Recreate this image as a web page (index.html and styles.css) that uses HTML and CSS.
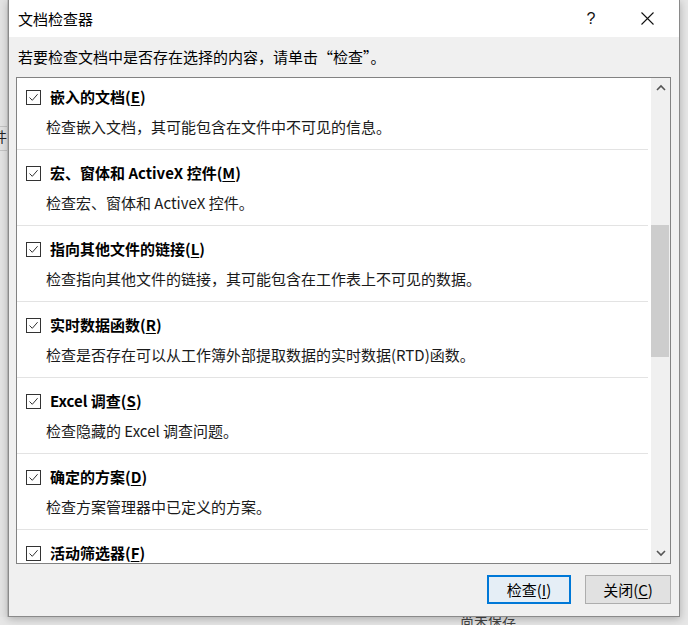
FILE: index.html
```html
<!DOCTYPE html>
<html lang="zh-CN">
<head>
<meta charset="utf-8">
<title>文档检查器</title>
<link rel="stylesheet" href="styles.css">
</head>
<body>
<div class="desktop">
  <div class="backdrop-left">
    <span class="bg-line bg-line-1"></span>
    <span class="bg-glyph">件</span>
    <span class="bg-line bg-line-2"></span>
  </div>
  <div class="dialog">
    <div class="titlebar">
      <span class="title">文档检查器</span>
      <div class="title-actions">
        <span class="help">?</span>
        <span class="close">
          <svg width="13" height="13" viewBox="0 0 13 13"><path d="M0.5 0.5 L12.5 12.5 M12.5 0.5 L0.5 12.5" stroke="#111" stroke-width="1.1" fill="none"/></svg>
        </span>
      </div>
    </div>
    <div class="body">
      <p class="intro">若要检查文档中是否存在选择的内容，请单击“检查”。</p>
      <div class="listbox">
        <div class="viewport">
          <div class="items">
            <div class="item">
              <div class="item-head"><span class="check"><svg width="15" height="15" viewBox="0 0 15 15"><rect x="0.5" y="0.5" width="14" height="14" fill="#fff" stroke="#333"/><path d="M3.5 7.5 L6.3 10.3 L11.6 4.2" stroke="#333" stroke-width="1" fill="none"/></svg></span><span class="item-title">嵌入的文档(<u>E</u>)</span></div>
              <div class="item-desc">检查嵌入文档，其可能包含在文件中不可见的信息。</div>
            </div>
            <div class="item">
              <div class="item-head"><span class="check"><svg width="15" height="15" viewBox="0 0 15 15"><rect x="0.5" y="0.5" width="14" height="14" fill="#fff" stroke="#333"/><path d="M3.5 7.5 L6.3 10.3 L11.6 4.2" stroke="#333" stroke-width="1" fill="none"/></svg></span><span class="item-title">宏、窗体和 ActiveX 控件(<u>M</u>)</span></div>
              <div class="item-desc">检查宏、窗体和 ActiveX 控件。</div>
            </div>
            <div class="item">
              <div class="item-head"><span class="check"><svg width="15" height="15" viewBox="0 0 15 15"><rect x="0.5" y="0.5" width="14" height="14" fill="#fff" stroke="#333"/><path d="M3.5 7.5 L6.3 10.3 L11.6 4.2" stroke="#333" stroke-width="1" fill="none"/></svg></span><span class="item-title">指向其他文件的链接(<u>L</u>)</span></div>
              <div class="item-desc">检查指向其他文件的链接，其可能包含在工作表上不可见的数据。</div>
            </div>
            <div class="item">
              <div class="item-head"><span class="check"><svg width="15" height="15" viewBox="0 0 15 15"><rect x="0.5" y="0.5" width="14" height="14" fill="#fff" stroke="#333"/><path d="M3.5 7.5 L6.3 10.3 L11.6 4.2" stroke="#333" stroke-width="1" fill="none"/></svg></span><span class="item-title">实时数据函数(<u>R</u>)</span></div>
              <div class="item-desc">检查是否存在可以从工作簿外部提取数据的实时数据(RTD)函数。</div>
            </div>
            <div class="item">
              <div class="item-head"><span class="check"><svg width="15" height="15" viewBox="0 0 15 15"><rect x="0.5" y="0.5" width="14" height="14" fill="#fff" stroke="#333"/><path d="M3.5 7.5 L6.3 10.3 L11.6 4.2" stroke="#333" stroke-width="1" fill="none"/></svg></span><span class="item-title">Excel 调查(<u>S</u>)</span></div>
              <div class="item-desc">检查隐藏的 Excel 调查问题。</div>
            </div>
            <div class="item">
              <div class="item-head"><span class="check"><svg width="15" height="15" viewBox="0 0 15 15"><rect x="0.5" y="0.5" width="14" height="14" fill="#fff" stroke="#333"/><path d="M3.5 7.5 L6.3 10.3 L11.6 4.2" stroke="#333" stroke-width="1" fill="none"/></svg></span><span class="item-title">确定的方案(<u>D</u>)</span></div>
              <div class="item-desc">检查方案管理器中已定义的方案。</div>
            </div>
            <div class="item">
              <div class="item-head"><span class="check"><svg width="15" height="15" viewBox="0 0 15 15"><rect x="0.5" y="0.5" width="14" height="14" fill="#fff" stroke="#333"/><path d="M3.5 7.5 L6.3 10.3 L11.6 4.2" stroke="#333" stroke-width="1" fill="none"/></svg></span><span class="item-title">活动筛选器(<u>F</u>)</span></div>
            </div>
          </div>
        </div>
        <div class="scrollbar">
          <span class="arrow">
            <svg width="10" height="7" viewBox="0 0 10 7"><path d="M1 6 L5 2 L9 6" stroke="#555" stroke-width="1.6" fill="none"/></svg>
          </span>
          <div class="track">
            <span class="track-gap"></span>
            <span class="thumb"></span>
          </div>
          <span class="arrow">
            <svg width="10" height="7" viewBox="0 0 10 7"><path d="M1 1 L5 5 L9 1" stroke="#555" stroke-width="1.6" fill="none"/></svg>
          </span>
        </div>
      </div>
      <div class="buttons">
        <button class="btn btn-default">检查(<u>I</u>)</button>
        <button class="btn">关闭(<u>C</u>)</button>
      </div>
    </div>
  </div>
  <div class="backdrop-right"></div>
</div>
<div class="backdrop-bottom"><span class="bg-status">尚未保存</span></div>
</body>
</html>
```

FILE: styles.css
```css
* { box-sizing: border-box; }
html, body {
  margin: 0;
  padding: 0;
}
body {
  width: 688px;
  height: 625px;
  overflow: hidden;
  background: #e6e6e6;
  font-family: "Noto Sans CJK SC", "Microsoft YaHei", sans-serif;
  color: #000;
}
.desktop {
  display: flex;
  height: 617px;
}
.backdrop-left {
  width: 8px;
  background: #e3e3e3;
  position: relative;
  overflow: hidden;
  border-right: 1px solid #c9c9c9;
}
.bg-line {
  position: absolute;
  left: 0;
  right: 0;
  height: 1px;
  background: #c4c4c4;
}
.bg-line-1 { top: 126px; }
.bg-line-2 { top: 150px; }
.bg-glyph {
  position: absolute;
  left: -7px;
  top: 127px;
  font-size: 14px;
  line-height: 18px;
  color: #222;
}
.dialog {
  width: 672px;
  display: flex;
  flex-direction: column;
  border: 1px solid #8a8a8a;
  border-top: none;
  background: #f0f0f0;
  box-shadow: 0 2px 8px rgba(0,0,0,0.25);
  position: relative;
  z-index: 1;
}
.backdrop-right {
  width: 8px;
  background: #e6e6e6;
}
.titlebar {
  height: 37px;
  background: #fff;
  display: flex;
  align-items: center;
  justify-content: space-between;
  padding-left: 9px;
}
.title {
  font-size: 15px;
  line-height: 20px;
  color: #000;
}
.title-actions {
  display: flex;
  align-items: center;
  height: 100%;
}
.help {
  width: 46px;
  text-align: center;
  font-size: 16px;
  line-height: 20px;
  color: #111;
  font-family: "Liberation Sans", sans-serif;
  margin-right: 10px;
}
.close {
  width: 46px;
  height: 100%;
  display: flex;
  align-items: center;
  justify-content: center;
  margin-right: 9px;
}
.body {
  flex: 1;
  display: flex;
  flex-direction: column;
  padding: 10px 8px 12px 7px;
}
.intro {
  margin: 0 0 10px 2px;
  font-size: 15px;
  line-height: 20px;
  color: #000;
}
.listbox {
  height: 487px;
  display: flex;
  border: 1px solid #828282;
  background: #fff;
}
.viewport {
  flex: 1;
  overflow: hidden;
  padding-right: 3px;
}
.items {
  margin-top: -4px;
}
.item {
  height: 76px;
  border-bottom: 1px solid #e3e3e3;
  padding: 15px 0 0 9px;
}
.item:last-child {
  height: auto;
  border-bottom: none;
}
.item-head {
  display: flex;
  align-items: center;
  height: 16px;
}
.check {
  width: 15px;
  height: 15px;
  display: block;
  margin-right: 9px;
}
.check svg { display: block; }
.item-title {
  font-size: 15px;
  font-weight: 700;
  line-height: 20px;
  color: #000;
}
.item-title u, .btn u {
  text-underline-offset: 2px;
}
.item-desc {
  margin-top: 12px;
  padding-left: 20px;
  font-size: 15px;
  line-height: 20px;
  color: #1a1a1a;
}
.scrollbar {
  width: 19px;
  background: #f0f0f0;
  display: flex;
  flex-direction: column;
}
.arrow {
  height: 19px;
  display: flex;
  align-items: center;
  justify-content: center;
}
.arrow svg { display: block; }
.track {
  flex: 1;
  display: flex;
  flex-direction: column;
}
.track-gap { height: 128px; }
.thumb {
  height: 132px;
  margin: 0 1px 0 0;
  background: #cdcdcd;
}
.buttons {
  margin-top: 11px;
  display: flex;
  justify-content: flex-end;
  gap: 14px;
}
.btn {
  height: 29px;
  font-family: inherit;
  font-size: 15px;
  line-height: 20px;
  color: #000;
  background: #e1e1e1;
  border: 1px solid #adadad;
  padding: 0;
  width: 86px;
}
.btn-default {
  width: 84px;
  border: 2px solid #0078d7;
  background: #e5eef6;
}
.backdrop-bottom {
  height: 8px;
  background: #e6e6e6;
  position: relative;
  overflow: hidden;
}
.bg-status {
  position: absolute;
  left: 460px;
  top: -6px;
  font-size: 14px;
  line-height: 18px;
  color: #444;
}
```
